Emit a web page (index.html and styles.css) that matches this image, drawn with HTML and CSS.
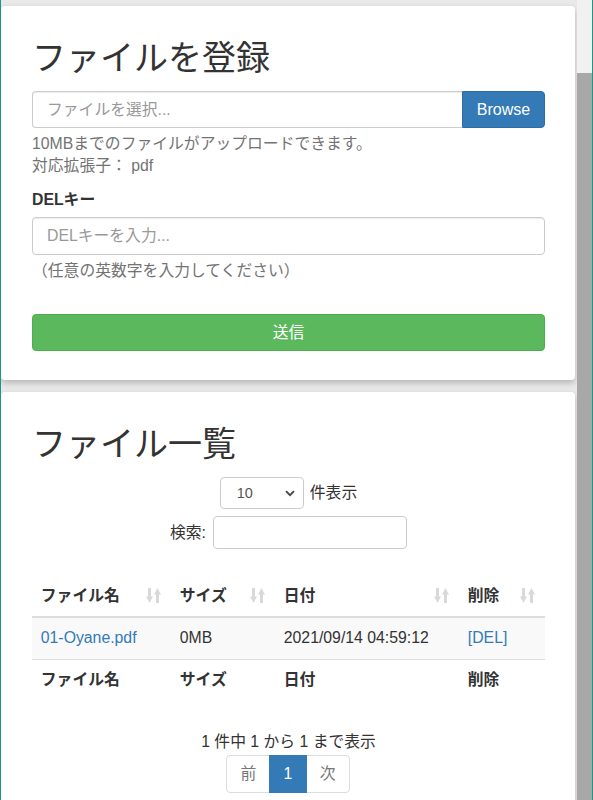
FILE: index.html
```html
<!DOCTYPE html>
<html lang="ja">
<head>
<meta charset="utf-8">
<title>ファイル</title>
<link rel="stylesheet" href="styles.css">
</head>
<body>
<div class="frame">
  <main class="page">
    <section class="card card-upload">
      <h2 class="title">ファイルを登録</h2>
      <div class="input-group">
        <div class="file-input">ファイルを選択...</div>
        <span class="btn-browse">Browse</span>
      </div>
      <p class="help">10MBまでのファイルがアップロードできます。<br>対応拡張子： pdf</p>
      <label class="label">DELキー</label>
      <input class="text-input" type="text" placeholder="DELキーを入力...">
      <p class="help help-paren">（任意の英数字を入力してください）</p>
      <button class="btn-submit" type="button">送信</button>
    </section>
    <section class="card card-list">
      <h2 class="title">ファイル一覧</h2>
      <div class="length-row">
        <div class="select"><span>10</span><svg class="chev" width="10" height="7" viewBox="0 0 10 7"><path d="M1 1.2 L5 5.2 L9 1.2" fill="none" stroke="#444" stroke-width="1.8"/></svg></div>
        <span>件表示</span>
      </div>
      <div class="search-row">
        <span>検索:</span>
        <div class="search-input"></div>
      </div>
      <table class="table">
        <colgroup><col class="c1"><col class="c2"><col class="c3"><col class="c4"></colgroup>
        <thead>
          <tr>
            <th><div class="th-inner"><span>ファイル名</span><svg class="sort" width="15" height="17" viewBox="0 0 15 17"><rect x="2" y="1" width="3" height="10" fill="#d9d9d9"/><path d="M0 9.5 H7 L3.5 16 Z" fill="#d9d9d9"/><rect x="10" y="6" width="3" height="10" fill="#d9d9d9"/><path d="M8 7.5 H15 L11.5 1 Z" fill="#d9d9d9"/></svg></div></th>
            <th><div class="th-inner"><span>サイズ</span><svg class="sort" width="15" height="17" viewBox="0 0 15 17"><rect x="2" y="1" width="3" height="10" fill="#d9d9d9"/><path d="M0 9.5 H7 L3.5 16 Z" fill="#d9d9d9"/><rect x="10" y="6" width="3" height="10" fill="#d9d9d9"/><path d="M8 7.5 H15 L11.5 1 Z" fill="#d9d9d9"/></svg></div></th>
            <th><div class="th-inner"><span>日付</span><svg class="sort" width="15" height="17" viewBox="0 0 15 17"><rect x="2" y="1" width="3" height="10" fill="#d9d9d9"/><path d="M0 9.5 H7 L3.5 16 Z" fill="#d9d9d9"/><rect x="10" y="6" width="3" height="10" fill="#d9d9d9"/><path d="M8 7.5 H15 L11.5 1 Z" fill="#d9d9d9"/></svg></div></th>
            <th><div class="th-inner"><span>削除</span><svg class="sort" width="15" height="17" viewBox="0 0 15 17"><rect x="2" y="1" width="3" height="10" fill="#d9d9d9"/><path d="M0 9.5 H7 L3.5 16 Z" fill="#d9d9d9"/><rect x="10" y="6" width="3" height="10" fill="#d9d9d9"/><path d="M8 7.5 H15 L11.5 1 Z" fill="#d9d9d9"/></svg></div></th>
          </tr>
        </thead>
        <tbody>
          <tr>
            <td><a class="link" href="#">01-Oyane.pdf</a></td>
            <td>0MB</td>
            <td>2021/09/14 04:59:12</td>
            <td><a class="link" href="#">[DEL]</a></td>
          </tr>
        </tbody>
        <tfoot>
          <tr><th>ファイル名</th><th>サイズ</th><th>日付</th><th>削除</th></tr>
        </tfoot>
      </table>
      <div class="info">1 件中 1 から 1 まで表示</div>
      <ul class="pagination">
        <li class="pg disabled first">前</li>
        <li class="pg active">1</li>
        <li class="pg disabled last">次</li>
      </ul>
    </section>
  </main>
  <div class="scrollbar"><div class="thumb"></div></div>
</div>
</body>
</html>
```
FILE: styles.css
```css
* { box-sizing: border-box; }
html, body { margin: 0; padding: 0; }
body {
  font-family: "Liberation Sans", "Noto Sans CJK JP", sans-serif;
  font-size: 15.8px;
  line-height: 22px;
  color: #333;
  overflow: hidden;
  background: #e9e9e9;
}
.frame {
  display: flex;
  height: 800px;
  overflow: hidden;
  border-left: 1px solid #17988a;
  border-right: 1px solid #17988a;
}
.page {
  flex: 1;
  padding: 6px 2px 0 0;
  background: #e9e9e9;
}
.scrollbar {
  width: 16px;
  background: #f1f1f1;
  display: flex;
  flex-direction: column;
}
.thumb {
  margin-top: 73px;
  flex: 1;
  background: #a8a8a8;
}
.card {
  background: #fff;
  border-radius: 4px;
  box-shadow: 0 3px 6px rgba(0,0,0,0.22);
  padding: 34px 30px 29px 31px;
}
.card-list { margin-top: 12px; padding-bottom: 40px; }
.title {
  margin: 0 0 15px;
  font-size: 34px;
  line-height: 36px;
  font-weight: normal;
  color: #333;
}
.input-group { display: flex; height: 37px; }
.file-input {
  flex: 1;
  border: 1px solid #ccc;
  border-right: 0;
  border-radius: 4px 0 0 4px;
  padding: 7px 14px;
  color: #999;
  box-shadow: inset 0 1px 1px rgba(0,0,0,0.075);
}
.btn-browse {
  width: 83px;
  background: #337ab7;
  border: 1px solid #2e6da4;
  border-radius: 0 4px 4px 0;
  color: #fff;
  font-size: 16px;
  display: flex;
  align-items: center;
  justify-content: center;
}
.help {
  margin: 5px 0 0;
  color: #737373;
}
.label {
  display: block;
  margin-top: 12px;
  margin-bottom: 6px;
  font-weight: bold;
}
.text-input {
  display: block;
  width: 100%;
  height: 38px;
  border: 1px solid #ccc;
  border-radius: 4px;
  padding: 6px 14px;
  font: inherit;
  color: #555;
  box-shadow: inset 0 1px 1px rgba(0,0,0,0.075);
}
.text-input::placeholder { color: #999; }
.help-paren { margin-top: 5px; }
.btn-submit {
  display: block;
  width: 100%;
  height: 37px;
  margin-top: 32px;
  background: #5cb85c;
  border: 1px solid #4cae4c;
  border-radius: 4px;
  color: #fff;
  font: inherit;
}
.length-row, .search-row {
  display: flex;
  justify-content: center;
  align-items: center;
}
.length-row { gap: 6px; height: 32px; }
.search-row { gap: 7px; height: 33px; margin-top: 7px; }
.select {
  width: 84px;
  height: 32px;
  border: 1px solid #ccc;
  border-radius: 4px;
  display: flex;
  align-items: center;
  justify-content: space-between;
  padding: 0 8px 0 16px;
  font-size: 14.5px;
  color: #555;
}
.search-input {
  width: 194px;
  height: 33px;
  border: 1px solid #ccc;
  border-radius: 4px;
}
.table {
  width: 100%;
  border-collapse: collapse;
  margin-top: 27px;
  table-layout: fixed;
}
.c1 { width: 139px; }
.c2 { width: 104px; }
.c3 { width: 184px; }
.c4 { width: 86px; }
.table th, .table td {
  padding: 8.8px;
  text-align: left;
  line-height: 22px;
}
.table tbody td, .table tfoot th { padding-top: 9.6px; padding-bottom: 9.6px; }
.table thead th { border-bottom: 2px solid #ddd; }
.table tbody td { background: #f9f9f9; }
.table tfoot th { border-top: 1px solid #ddd; }
.th-inner {
  display: flex;
  justify-content: space-between;
  align-items: center;
}
.sort { display: block; margin-right: 1px; }
.link { color: #337ab7; text-decoration: none; }
.info {
  margin-top: 30px;
  text-align: center;
}
.pagination {
  list-style: none;
  margin: 2px 0 0;
  padding: 0;
  display: flex;
  justify-content: center;
}
.pg {
  padding: 7px 13.2px;
  border: 1px solid #ddd;
  margin-left: -1px;
  line-height: 22px;
}
.pg.disabled { color: #777; background: #fff; }
.pg.active { background: #337ab7; border-color: #337ab7; color: #fff; position: relative; }
.pg.first { border-radius: 4px 0 0 4px; }
.pg.last { border-radius: 0 4px 4px 0; }
```
